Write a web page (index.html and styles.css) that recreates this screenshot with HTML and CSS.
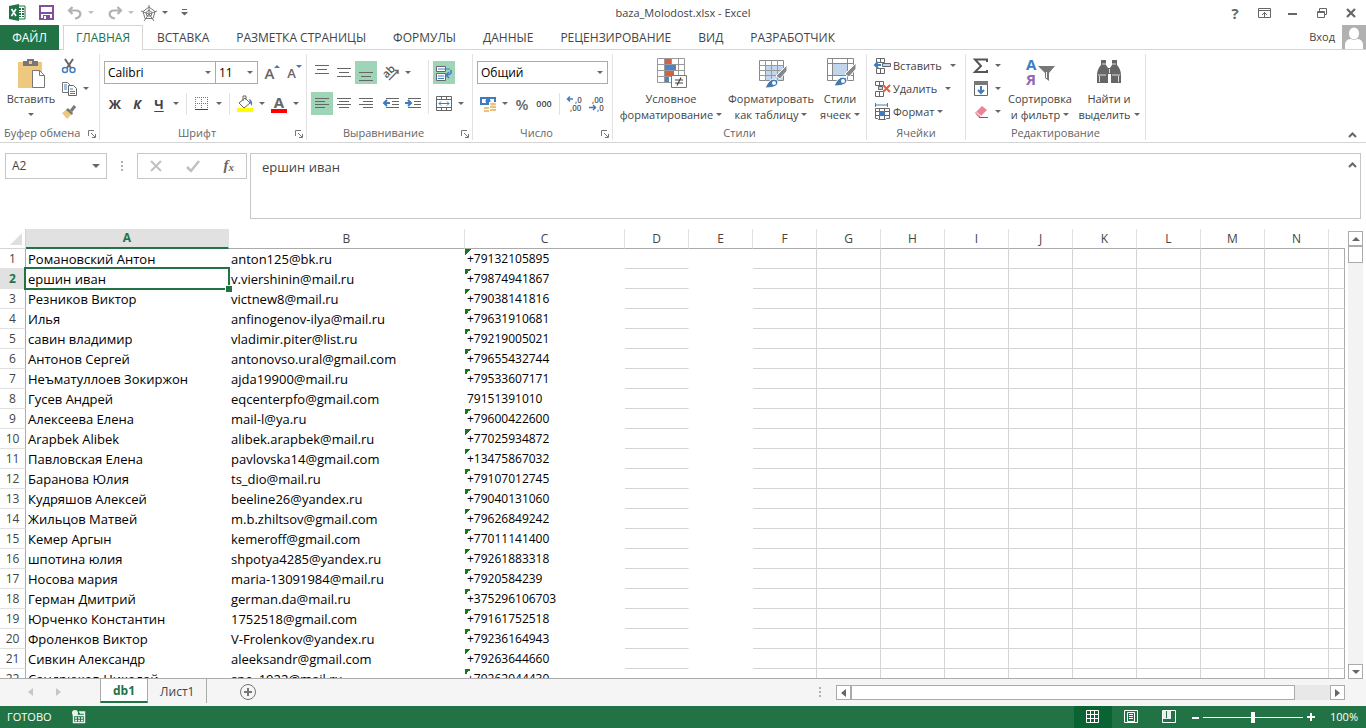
FILE: index.html
```html
<!DOCTYPE html>
<html lang="ru">
<head>
<meta charset="utf-8">
<title>baza_Molodost.xlsx - Excel</title>
<link rel="stylesheet" href="styles.css">
</head>
<body>
<header class="titlebar">
  <div class="quick">
    <svg class="app" width="17" height="17" viewBox="0 0 17 17"><path d="M9 2h7v13H9z" fill="#fff" stroke="#217346"/><path d="M10 4h2v2h-2zM13 4h2v2h-2zM10 7h2v1h-2zM13 7h2v1h-2zM10 9h2v2h-2zM13 9h2v2h-2zM10 12h2v1h-2zM13 12h2v1h-2z" fill="#217346"/><path d="M0 2l10-2v17L0 15z" fill="#217346"/><path d="M2.500 5l4.500 7M7 5l-4.500 7" stroke="#fff" stroke-width="1.600"/></svg>
    <button class="qbtn" aria-label="Сохранить"><svg width="15" height="15" viewBox="0 0 15 15"><path d="M1 1h13v13H1z" fill="none" stroke="#80509f" stroke-width="2"/><path d="M2 7h11v2H2zM4 10h7v4H4z" fill="#80509f"/><path d="M5 11h2v3H5z" fill="#fff"/></svg></button>
    <button class="qbtn" aria-label="Отменить"><svg width="16" height="14" viewBox="0 0 16 14"><path d="M5.500 1L2 4.500 5.500 8M2 4.500h7c6 0 6 7-1 8" fill="none" stroke="#b1b1b1" stroke-width="2.200"/></svg><i class="tri pale"></i></button>
    <button class="qbtn" aria-label="Вернуть"><svg width="16" height="14" viewBox="0 0 16 14"><path d="M10.500 1L14 4.500 10.500 8M14 4.500H7c-6 0-6 7 1 8" fill="none" stroke="#b1b1b1" stroke-width="2.200"/></svg><i class="tri pale"></i></button>
    <button class="qbtn near" aria-label="Диаграмма"><svg width="16" height="16" viewBox="0 0 16 16"><path d="M8 2l6 4.500-2 7H4l-2-7zM8 5l3 2.500-1 3.500H6L5 7.500zM8 0v9M0 6l8 3M16 6L8 9M3 16l5-7M13 16L8 9" fill="none" stroke="#777"/></svg><i class="tri"></i></button>
    <button class="qbtn" aria-label="Настройка панели"><svg width="7" height="7" viewBox="0 0 7 7"><path d="M1 0h5v1H1zM0 3h7L3.500 6.500z" fill="#666"/></svg></button>
  </div>
  <h1 class="doc">baza_Molodost.xlsx - Excel</h1>
  <div class="window">
    <button class="win help" aria-label="Справка">?</button>
    <button class="win" aria-label="Параметры ленты"><svg width="13" height="10" viewBox="0 0 13 10"><path d="M.5.5h12v9H.5zM1 2.500h11" fill="none" stroke="#666"/><path d="M6 4h1v5H6zM5 5h3v1H5zM4 6h1v1H4zM8 6h1v1H8z" fill="#666"/></svg></button>
    <button class="win" aria-label="Свернуть"><svg width="10" height="10"><path d="M0 5h9v2H0z" fill="#666"/></svg></button>
    <button class="win" aria-label="Восстановить"><svg width="10" height="10" viewBox="0 0 10 10"><path d="M2.500 3V.5h7v6H7.500M.5 3.500h7v6h-7zM0 4.500h8" fill="none" stroke="#666"/></svg></button>
    <button class="win" aria-label="Закрыть"><svg width="10" height="10" viewBox="0 0 10 10"><path d="M1 1l8 8M9 1L1 9" stroke="#666" stroke-width="2.200"/></svg></button>
  </div>
</header>

<nav class="tabs">
  <button class="file">ФАЙЛ</button>
  <button class="tab active">ГЛАВНАЯ</button>
  <button class="tab">ВСТАВКА</button>
  <button class="tab">РАЗМЕТКА СТРАНИЦЫ</button>
  <button class="tab">ФОРМУЛЫ</button>
  <button class="tab">ДАННЫЕ</button>
  <button class="tab">РЕЦЕНЗИРОВАНИЕ</button>
  <button class="tab">ВИД</button>
  <button class="tab">РАЗРАБОТЧИК</button>
  <button class="login">Вход <svg width="24" height="24" viewBox="0 0 24 24"><path d="M0 0h24v24H0z" fill="#b1b1b1"/><ellipse cx="12" cy="8.500" rx="5" ry="6" fill="#fff"/><path d="M3 24v-5q1-5 6-5 3 2 6 0 5 0 6 5v5z" fill="#fff"/></svg></button>
</nav>

<section class="ribbon">
  <div class="group g-clip">
    <div class="body">
      <button class="large paste"><svg width="32" height="32" viewBox="0 0 32 32"><path d="M3 5h24v26H3z" fill="#edc87e"/><path d="M9 4h3V2h7v2h4v5H8V4z" fill="#777"/><path d="M14 4h3v3h-3z" fill="#edc87e"/><path d="M17.500 13.500h7l5 5v12h-12z" fill="#fff" stroke="#777"/><path d="M24.500 13.500v5h5" fill="none" stroke="#777"/></svg><span>Вставить</span><i class="tri"></i></button>
      <div class="stack">
        <button class="btn" aria-label="Вырезать"><svg width="16" height="16" viewBox="0 0 16 16"><path d="M4 1l6 9M12 1l-6 9" stroke="#666" stroke-width="2"/><circle cx="4" cy="12" r="2.500" fill="none" stroke="#4a7fb8" stroke-width="1.500"/><circle cx="11.500" cy="12" r="2.500" fill="none" stroke="#4a7fb8" stroke-width="1.500"/></svg></button>
        <span class="split"><button class="btn" aria-label="Копировать"><svg width="16" height="16" viewBox="0 0 16 16"><path d="M1.500 1.500h5l3 3v7h-8z" fill="#fff" stroke="#777"/><path d="M3 4h3M3 6h3M3 8h3" stroke="#4a7fb8"/><path d="M7.500 4.500h5l3 3v7h-8z" fill="#fff" stroke="#666"/><path d="M9 8h3M9 10.500h5M9 12.500h5" stroke="#4a7fb8"/></svg></button><button class="arr" aria-label="Ещё"><i class="tri"></i></button></span>
        <button class="btn" aria-label="Формат по образцу"><svg width="16" height="16" viewBox="0 0 16 16"><path d="M1 9l5-4 5 5-5 5z" fill="#edc87e"/><path d="M7 4l5 5-1 2-6-5z" fill="#777"/><path d="M10 7l4-5" stroke="#777" stroke-width="3"/></svg></button>
      </div>
    </div>
    <div class="caption">Буфер обмена<button class="launch" aria-label="Параметры буфера"><svg width="8" height="8" viewBox="0 0 8 8"><path d="M.5 6V.5H6M3 3l4 4M7.500 4v3.500H4" fill="none" stroke="#777"/></svg></button></div>
  </div>

  <div class="group g-font">
    <div class="body rows">
      <div class="row"><label class="combo c-font"><select aria-label="Шрифт"><option>Calibri</option></select><i class="tri"></i></label><label class="combo c-size"><select aria-label="Размер"><option>11</option></select><i class="tri"></i></label><span class="gap2"></span><button class="btn grow" aria-label="Увеличить размер">A<i class="up"></i></button><button class="btn grow small" aria-label="Уменьшить размер">A<i class="down"></i></button></div>
      <div class="row"><button class="btn bold">Ж</button><button class="btn ital">К</button><button class="btn under">Ч</button><button class="arr" aria-label="Ещё"><i class="tri"></i></button><i class="sep"></i><button class="btn" aria-label="Границы"><svg width="14" height="14" viewBox="0 0 14 14"><path d="M0 .5h13M0 6.500h13M.5 0v13M6.500 0v13M12.500 0v13" stroke="#777" stroke-dasharray="1 1"/><path d="M0 12.500h13" stroke="#444"/></svg></button><button class="arr" aria-label="Ещё"><i class="tri"></i></button><i class="sep"></i><button class="btn" aria-label="Цвет заливки"><svg width="18" height="18" viewBox="0 0 18 18"><path d="M1 13h16v4H1z" fill="#ff0"/><path d="M3 8l6-5 5 5-6 5zM7 6V1h3v4" fill="#fff" stroke="#666"/><path d="M13 4q4 1 3 7l-2-3z" fill="#4a7fb8"/></svg></button><button class="arr" aria-label="Ещё"><i class="tri"></i></button><button class="btn" aria-label="Цвет текста"><span class="fontcolor">A</span></button><button class="arr" aria-label="Ещё"><i class="tri"></i></button></div>
    </div>
    <div class="caption">Шрифт<button class="launch" aria-label="Параметры шрифта"><svg width="8" height="8" viewBox="0 0 8 8"><path d="M.5 6V.5H6M3 3l4 4M7.500 4v3.500H4" fill="none" stroke="#777"/></svg></button></div>
  </div>

  <div class="group g-align">
    <div class="body">
      <div class="rows">
        <div class="row"><button class="btn" aria-label="По верхнему краю"><svg width="16" height="16"><path d="M1 .5h14M3 4.500h10M1 8.500h14" stroke="#666"/></svg></button><button class="btn" aria-label="По середине"><svg width="16" height="16"><path d="M1 3.500h14M3 7.500h10M1 11.500h14" stroke="#666"/></svg></button><button class="btn on" aria-label="По нижнему краю"><svg width="16" height="16"><path d="M1 7.500h14M3 11.500h10M1 15.500h14" stroke="#666"/></svg></button><span class="gap2"></span><button class="btn" aria-label="Ориентация"><svg width="18" height="18" viewBox="0 0 18 18"><text x="1" y="12" class="rot" transform="rotate(-45 6 9)">ab</text><path d="M7 16l9-9M12.500 6.500H16V10" fill="none" stroke="#666" stroke-width="1.400"/></svg></button><button class="arr" aria-label="Ещё"><i class="tri"></i></button></div>
        <div class="row"><button class="btn on" aria-label="По левому краю"><svg width="16" height="14"><path d="M1 1.500h14M1 4.500h10M1 7.500h14M1 10.500h10" stroke="#666"/></svg></button><button class="btn" aria-label="По центру"><svg width="16" height="14"><path d="M1 1.500h14M3 4.500h10M1 7.500h14M3 10.500h10" stroke="#666"/></svg></button><button class="btn" aria-label="По правому краю"><svg width="16" height="14"><path d="M1 1.500h14M5 4.500h10M1 7.500h14M5 10.500h10" stroke="#666"/></svg></button><span class="gap2"></span><button class="btn" aria-label="Уменьшить отступ"><svg width="18" height="14" viewBox="0 0 18 14"><path d="M4 1.500h13M10 4.500h7M10 7.500h7M4 10.500h13" stroke="#666"/><path d="M8 6H2M5 3L2 6l3 3" fill="none" stroke="#3f7cbf" stroke-width="2"/></svg></button><button class="btn" aria-label="Увеличить отступ"><svg width="18" height="14" viewBox="0 0 18 14"><path d="M4 1.500h13M10 4.500h7M10 7.500h7M4 10.500h13" stroke="#666"/><path d="M1 6h6M4 3l3 3-3 3" fill="none" stroke="#3f7cbf" stroke-width="2"/></svg></button></div>
      </div>
      <i class="sep tall"></i>
      <div class="rows">
        <div class="row"><button class="btn on" aria-label="Перенести текст"><svg width="18" height="18" viewBox="0 0 18 18"><path d="M1.500 2.500h9v5h-9zM1.500 9.500h9v7h-9z" fill="#fff" stroke="#666"/><path d="M3 5h12M3 12h6M3 14.500h6" stroke="#3f7cbf"/><path d="M16 6v3q-1 2-5 2M14 8l-3 3 3 3" fill="none" stroke="#3f7cbf" stroke-width="1.500"/></svg></button></div>
        <div class="row"><button class="btn" aria-label="Объединить"><svg width="16" height="16" viewBox="0 0 16 16"><path d="M.5.5h15v14H.5zM0 3.500h16M0 11.500h16M5.500 0v3M10.500 0v3M5.500 12v3M10.500 12v3" fill="none" stroke="#666"/><path d="M3 7.500h10M5 5.500l-2 2 2 2M11 5.500l2 2-2 2" fill="none" stroke="#3f7cbf"/></svg></button><button class="arr" aria-label="Ещё"><i class="tri"></i></button></div>
      </div>
    </div>
    <div class="caption">Выравнивание<button class="launch" aria-label="Параметры выравнивания"><svg width="8" height="8" viewBox="0 0 8 8"><path d="M.5 6V.5H6M3 3l4 4M7.500 4v3.500H4" fill="none" stroke="#777"/></svg></button></div>
  </div>

  <div class="group g-num">
    <div class="body rows">
      <div class="row"><label class="combo c-num"><select aria-label="Числовой формат"><option>Общий</option></select><i class="tri"></i></label></div>
      <div class="row"><button class="btn" aria-label="Финансовый формат"><svg width="18" height="18" viewBox="0 0 18 18"><path d="M1 2h16v8H1z" fill="#3f7cbf"/><path d="M3 4h12v4H3z" fill="#fff"/><circle cx="9" cy="6" r="2.500" fill="#3f7cbf"/><path d="M10 7h8v9h-8zM4 11h8v6H4z" fill="#fff"/><ellipse cx="14" cy="9" rx="3" ry="1.500" fill="#edc180"/><path d="M11 11h6v2h-6zM11 14h6v2h-6zM5 12h5v2H5zM5 15h5v2H5z" fill="#edc180"/></svg></button><button class="arr" aria-label="Ещё"><i class="tri"></i></button><button class="btn pct">%</button><button class="btn zeros">000</button><i class="sep"></i><button class="btn" aria-label="Увеличить разрядность"><svg width="18" height="18" viewBox="0 0 18 18"><path d="M7 4H2M4 1.500L1.500 4 4 6.500" fill="none" stroke="#3f7cbf" stroke-width="1.500"/><text x="9" y="8" class="dec">,0</text><text x="4" y="16" class="dec">,00</text></svg></button><button class="btn" aria-label="Уменьшить разрядность"><svg width="18" height="18" viewBox="0 0 18 18"><path d="M1 12.500h6M5 10l2.500 2.500L5 15" fill="none" stroke="#3f7cbf" stroke-width="1.500"/><text x="4" y="8" class="dec">,00</text><text x="9" y="16" class="dec">,0</text></svg></button></div>
    </div>
    <div class="caption">Число<button class="launch" aria-label="Параметры числа"><svg width="8" height="8" viewBox="0 0 8 8"><path d="M.5 6V.5H6M3 3l4 4M7.500 4v3.500H4" fill="none" stroke="#777"/></svg></button></div>
  </div>

  <div class="group g-styles">
    <div class="body bigs">
      <button class="large l1"><svg width="32" height="32" viewBox="0 0 32 32"><path d="M2.500 1.500h27v24h-27zM2 7.500h28M2 13.500h28M2 19.500h28M9.500 1v25M16.500 1v25M23.500 1v25" fill="#fff" stroke="#999"/><path d="M10 2h6v5h-6zM10 14h9v5h-9z" fill="#d9603f"/><path d="M10 8h11v5H10zM10 20h4v5h-4z" fill="#4a86c5"/><path d="M16.500 18.500h15v12h-15z" fill="#fff" stroke="#777"/><path d="M20 23h8M20 26h8M26 20.500l-4 8" stroke="#444" stroke-width="1.200"/></svg><span>Условное</span><span>форматирование<i class="tri"></i></span></button>
      <button class="large l2"><svg width="32" height="32" viewBox="0 0 32 32"><path d="M4.500 3.500h24v20h-24z" fill="#fff" stroke="#888"/><path d="M11 9h17v14H11z" fill="#c1d5ec"/><path d="M4 8.500h25M4 13.500h25M4 18.500h25M10.500 3v21M16.500 3v21M22.500 3v21" stroke="#999"/><path d="M32 8v6l-7 8-4-3z" fill="#888" stroke="#fff"/><path d="M10 31q4-9 9-9 6 1 3 6-3 3-12 3z" fill="#4279b0" stroke="#fff"/><circle cx="19" cy="26" r="2" fill="#fff"/></svg><span>Форматировать</span><span>как таблицу<i class="tri"></i></span></button>
      <button class="large l3"><svg width="32" height="32" viewBox="0 0 32 32"><path d="M3.500 1.500h26v22h-26zM3 6.500h27M3 18.500h27M8.500 1v23M23.500 1v23" fill="#fff" stroke="#888"/><path d="M9 7h14v11H9z" fill="#c1d5ec"/><path d="M32 6v6l-7 8-4-3z" fill="#888" stroke="#fff"/><path d="M10 29q4-9 9-9 6 1 3 6-3 3-12 3z" fill="#4279b0" stroke="#fff"/><circle cx="19" cy="24" r="2" fill="#fff"/></svg><span>Стили</span><span>ячеек<i class="tri"></i></span></button>
    </div>
    <div class="caption">Стили</div>
  </div>

  <div class="group g-cells">
    <div class="body list">
      <button class="line"><svg width="18" height="18" viewBox="0 0 18 18"><path d="M3.500 1.500h8v4h-8zM3.500 11.500h8v5h-8zM7.500 1v4M7.500 12v4" fill="none" stroke="#666"/><path d="M9.500 6.500h8v3h-8z" fill="#c1d5ec" stroke="#666"/><path d="M8 8H3M5 5L2 8l3 3" fill="none" stroke="#3f7cbf" stroke-width="2"/></svg><span>Вставить</span><i class="tri far"></i></button>
      <button class="line"><svg width="18" height="18" viewBox="0 0 18 18"><path d="M2.500 1.500h8v4h-8zM2.500 11.500h8v5h-8zM6.500 1v4M6.500 12v4" fill="none" stroke="#666"/><path d="M5.500 6.500h4v3h-4z" fill="#c1d5ec" stroke="#666"/><path d="M10 5l7 7M17 5l-7 7" stroke="#e0603f" stroke-width="2"/></svg><span>Удалить</span><i class="tri far"></i></button>
      <button class="line"><svg width="18" height="18" viewBox="0 0 18 18"><path d="M2.500 0v4M14.500 0v4M3 2h11" stroke="#3f7cbf"/><path d="M2.500 5.500h14v10h-3l-1 1h-7l-1-1h-2zM2 8.500h15M2 12.500h15M6.500 5v11M11.500 5v11" fill="none" stroke="#666"/><path d="M6 8h6v5H6z" fill="#3f7cbf"/></svg><span>Формат</span><i class="tri"></i></button>
    </div>
    <div class="caption">Ячейки</div>
  </div>

  <div class="group g-edit">
    <div class="body">
      <div class="stack">
        <span class="split"><button class="btn" aria-label="Сумма"><svg width="16" height="16" viewBox="0 0 16 16"><path d="M14 4V1.500H2L8 8l-6 6h12V12" fill="none" stroke="#555" stroke-width="2"/></svg></button><button class="arr" aria-label="Ещё"><i class="tri"></i></button></span>
        <span class="split"><button class="btn" aria-label="Заполнить"><svg width="16" height="16" viewBox="0 0 16 16"><path d="M1.500.5h13v14h-13z" fill="#fff" stroke="#666"/><path d="M1 0h14v4H1z" fill="#777"/><path d="M8 5v7M5 9l3 3 3-3" fill="none" stroke="#3f7cbf" stroke-width="2"/></svg></button><button class="arr" aria-label="Ещё"><i class="tri"></i></button></span>
        <span class="split"><button class="btn" aria-label="Очистить"><svg width="16" height="16" viewBox="0 0 16 16"><path d="M2 9l7-7 5 4-7 7H5z" fill="#e98595"/><path d="M3.500 8.500L8 12" stroke="#fff"/><path d="M6 13.500h9" stroke="#666"/></svg></button><button class="arr" aria-label="Ещё"><i class="tri"></i></button></span>
      </div>
      <div class="bigs">
        <button class="large l4"><svg width="32" height="32" viewBox="0 0 32 32"><text x="2" y="13" class="az" fill="#3f7cbf">А</text><text x="2" y="28" class="az" fill="#9565b5">Я</text><path d="M14 9h17l-6 7v8l-4-3v-5z" fill="#777"/><path d="M22.500 15v6" stroke="#fff"/></svg><span>Сортировка</span><span>и фильтр<i class="tri"></i></span></button>
        <button class="large l5"><svg width="32" height="32" viewBox="0 0 32 32"><path d="M8 3h5v5l2 3h2l2-3V3h5v5q4 4 4 11v7H18v-9h-3v9H4v-7q0-7 4-11z" fill="#666"/><path d="M5 18h8M19 18h8M9 7h4M19 7h4M16.500 12v4M6.500 19v6M25.500 19v6" stroke="#ddd"/></svg><span>Найти и</span><span>выделить<i class="tri"></i></span></button>
      </div>
    </div>
    <div class="caption">Редактирование</div>
  </div>
  <button class="collapse" aria-label="Свернуть ленту"><svg width="9" height="6" viewBox="0 0 9 6"><path d="M1 5l3.500-3.500L8 5" fill="none" stroke="#666" stroke-width="2"/></svg></button>
</section>

<section class="formula">
  <label class="namebox"><input type="text" value="A2" aria-label="Имя"><i class="tri wide"></i></label>
  <i class="dots"></i>
  <div class="fx">
    <button aria-label="Отмена"><svg width="12" height="12" viewBox="0 0 12 12"><path d="M1 1l10 10M11 1L1 11" stroke="#c0c0c0" stroke-width="1.800"/></svg></button>
    <button aria-label="Ввод"><svg width="14" height="12" viewBox="0 0 14 12"><path d="M1 7l4 4 8-10" fill="none" stroke="#c0c0c0" stroke-width="2.500"/></svg></button>
    <button class="fn" aria-label="Вставить функцию">f<sub>x</sub></button>
  </div>
  <div class="entry"><textarea aria-label="Строка формул">ершин иван</textarea><button aria-label="Свернуть строку"><svg width="9" height="6" viewBox="0 0 9 6"><path d="M1 5l3.500-3.500L8 5" fill="none" stroke="#666" stroke-width="2"/></svg></button></div>
</section>

<main class="sheet">
  <div class="grid">
    <table>
      <colgroup><col class="k-row"><col class="k-a"><col class="k-b"><col class="k-c"><col class="k-n" span="11"><col></colgroup>
      <thead><tr><th class="corner"><svg width="12" height="12"><path d="M12 0v12H0z" fill="#dfdfdf"/></svg></th><th class="cur">A</th><th>B</th><th>C</th><th>D</th><th>E</th><th>F</th><th>G</th><th>H</th><th>I</th><th>J</th><th>K</th><th>L</th><th>M</th><th>N</th><th></th></tr></thead>
      <tbody id="rows"></tbody>
    </table>
  </div>
  <div class="vscroll"><button aria-label="Вверх"><i class="tri wide flip"></i></button><div class="vthumb"></div><div class="fill"></div><button aria-label="Вниз"><i class="tri wide"></i></button></div>
</main>

<footer class="sheets">
  <button class="nav" aria-label="Назад"><svg width="5" height="8"><path d="M5 0v8L0 4z" fill="#c6c6c6"/></svg></button>
  <button class="nav" aria-label="Вперёд"><svg width="5" height="8"><path d="M0 0v8l5-4z" fill="#c6c6c6"/></svg></button>
  <button class="stab active">db1</button>
  <button class="stab">Лист1</button>
  <button class="add" aria-label="Новый лист"><svg width="16" height="16" viewBox="0 0 16 16"><circle cx="8" cy="8" r="7.500" fill="none" stroke="#777"/><path d="M8 4v8M4 8h8" stroke="#777" stroke-width="2"/></svg></button>
  <i class="dots"></i>
  <div class="hscroll"><button aria-label="Влево"><svg width="5" height="8"><path d="M5 0v8L0 4z" fill="#666"/></svg></button><div class="hthumb"></div><div class="fill"></div><button aria-label="Вправо"><svg width="5" height="8"><path d="M0 0v8l5-4z" fill="#666"/></svg></button></div>
</footer>

<div class="status">
  <span class="ready">ГОТОВО</span>
  <svg class="macro" width="14" height="14" viewBox="0 0 14 14"><path d="M1.500 5v7.500h11V2H7M1 5.500h12M3 8h2M6 8h2M9 8h2M3 10.500h2M6 10.500h2M9 10.500h2M8 3h4" fill="none" stroke="#e8f2ec" stroke-width="1.400"/><circle cx="3" cy="3" r="3" fill="#e8f2ec"/></svg>
  <button class="view on" aria-label="Обычный"><svg width="14" height="14"><path d="M.5.5h12v12H.5zM0 4.500h13M0 8.500h13M4.500 0v13M8.500 0v13" fill="none" stroke="#fff"/></svg></button>
  <button class="view" aria-label="Разметка"><svg width="14" height="14"><path d="M.5.5h13v12H.5zM3.500 2.500h7v9h-7zM5 4.500h4M5 6.500h4M5 8.500h4" fill="none" stroke="#fff"/></svg></button>
  <button class="view" aria-label="Страничный"><svg width="14" height="14"><path d="M.5.5h13v12H.5z" fill="none" stroke="#fff"/><path d="M1 1h3v7H1zM5 1h4v7H5zM1 8h8v1H1z" fill="#e8f2ec"/></svg></button>
  <button class="zoom" aria-label="Уменьшить"><svg width="7" height="7"><path d="M0 3h7v2H0z" fill="#fff"/></svg></button>
  <input class="slider" type="range" min="0" max="100" value="50" aria-label="Масштаб">
  <button class="zoom" aria-label="Увеличить"><svg width="8" height="8"><path d="M0 3h8v2H0zM3 0h2v8H3z" fill="#fff"/></svg></button>
  <span class="percent">100%</span>
</div>
<script src="rows.js"></script>
</body>
</html>
```
FILE: styles.css
```css
* { box-sizing: border-box; }
body {
  margin: 0; height: 100vh; overflow: hidden; display: flex; flex-direction: column;
  background: #fff; color: #444; font: 12px/16px "Open Sans", "Noto Sans", sans-serif;
}
button, select, input, textarea { font: inherit; color: inherit; border: 0; padding: 0; margin: 0; background: none; border-radius: 0; outline: 0; }
button { white-space: nowrap; }
svg { display: block; flex: none; overflow: visible; }

.tri { display: inline-block; flex: none; border: 3px solid transparent; border-top-color: #666; border-bottom: 0; }
.tri.pale { border-top-color: #c0c0c0; }
.tri.wide { border-width: 4px; border-bottom-width: 0; }
.tri.flip { transform: rotate(180deg); }

.titlebar { display: grid; grid-template-columns: 1fr auto 1fr; align-items: center; height: 25px; padding: 0 4px; }
.quick { display: flex; align-items: center; height: 22px; gap: 13px; padding-left: 5px; }
.qbtn { display: flex; align-items: center; gap: 5px; }
.qbtn.near { margin-left: -6px; }
.doc { margin: 0; font-size: 11px; font-weight: 400; }
.window { display: flex; justify-content: flex-end; gap: 7px; }
.win { display: flex; align-items: center; justify-content: center; width: 22px; height: 22px; }
.help { font-size: 15px; font-weight: 700; color: #666; }

.tabs { display: flex; height: 25px; border-bottom: 1px solid #d4d4d4; }
.file { width: 59px; background: #217346; color: #fff; height: 25px; margin-right: 4px; }
.tab { padding: 0 12px; height: 24px; border: 1px solid transparent; border-bottom: 0; margin-right: 1px; }
.tab.active { height: 25px; background: #fff; border-color: #d4d4d4; color: #217346; }
.login { display: flex; align-items: center; gap: 7px; margin-left: auto; height: 24px; font-size: 11px; }

.ribbon { display: flex; height: 93px; padding: 4px 0 1px; border-bottom: 1px solid #d4d4d4; font-size: 11px; }
.group { display: flex; flex-direction: column; flex: none; padding-left: 4px; border-right: 1px solid #e1e1e1; margin-bottom: 1px; }
.g-clip { width: 100px; }
.g-font { width: 207px; }
.g-align { width: 166px; }
.g-num { width: 140px; }
.g-styles { width: 254px; }
.g-cells { width: 99px; }
.g-edit { width: 180px; }
.body { display: flex; flex: 1; }
.caption { position: relative; height: 15px; text-align: center; font-size: 11px; color: #666; padding-right: 16px; white-space: nowrap; }
.g-clip .caption { text-align: left; }
.g-styles .caption, .g-cells .caption, .g-edit .caption { padding-right: 4px; }
.launch { position: absolute; right: 3px; top: 5px; }
.rows { display: flex; flex-direction: column; gap: 8px; padding-top: 7px; }
.row { display: flex; align-items: center; height: 23px; }
.btn { display: flex; align-items: center; justify-content: center; width: 22px; height: 23px; flex: none; }
.btn.on { background: #9fd5b7; }
.arr { display: flex; align-items: center; justify-content: center; width: 12px; height: 23px; flex: none; }
.sep { width: 1px; height: 22px; margin: 0 4px; background: #e1e1e1; flex: none; }
.sep.tall { height: 54px; margin-top: 6px; }
.gap2 { width: 3px; }
.stack { display: flex; flex-direction: column; }
.split { display: flex; }
.large { display: flex; flex-direction: column; align-items: center; padding-top: 3px; }
.large svg { margin-bottom: 2px; }
.large span .tri { margin-left: 3px; vertical-align: 3px; }
.paste { width: 54px; }
.paste > .tri { margin-top: 6px; }
.bigs { display: flex; gap: 2px; }
.l1 { width: 108px; }
.l2 { width: 88px; }
.l3 { width: 46px; }
.l4 { width: 72px; }
.l5 { width: 62px; }
.list { flex-direction: column; }
.line { display: flex; align-items: center; height: 23px; padding-left: 2px; }
.line span { margin: 0 3px 0 2px; }
.line .far { margin-left: 5px; }
.combo { position: relative; display: flex; height: 23px; border: 1px solid #ababab; color: #000; background: #fff; font-size: 12px; }
.combo select { appearance: none; width: 100%; padding-left: 3px; }
.combo .tri { position: absolute; right: 4px; top: 9px; pointer-events: none; }
.c-font { width: 112px; margin-right: -1px; }
.c-size { width: 43px; }
.c-num { width: 131px; }
.grow { position: relative; font-size: 15px; font-weight: 600; color: #666; padding-right: 5px; }
.grow.small { font-size: 13px; }
.up, .down { position: absolute; right: 3px; top: 4px; border: 3px solid transparent; }
.up { border-bottom-color: #3f7cbf; border-top: 0; }
.down { border-top-color: #3f7cbf; border-bottom: 0; }
.bold, .ital, .under { font-weight: 700; font-size: 13px; }
.ital { font-style: italic; }
.under { text-decoration: underline; text-underline-offset: 2px; }
.fontcolor { width: 16px; border-bottom: 4px solid #f00; font-size: 15px; line-height: 14px; font-weight: 700; color: #666; }
.rot { font-size: 11px; font-weight: 600; fill: #555; }
.pct { font-size: 15px; font-weight: 600; color: #666; }
.zeros { font-size: 9px; font-weight: 600; }
.dec { font-size: 8px; font-weight: 600; fill: #555; }
.az { font-size: 15px; font-weight: 700; }
.collapse { margin: auto 9px 1px auto; height: 10px; }

.formula { display: flex; align-items: flex-start; padding: 10px 5px; height: 86px; font-size: 12px; }
.namebox { display: flex; align-items: center; width: 102px; height: 26px; padding: 0 6px; border: 1px solid #c6c6c6; }
.namebox input { flex: 1; min-width: 0; }
.dots { width: 2px; height: 11px; flex: none; background: repeating-linear-gradient(#b1b1b1 0 2px, transparent 2px 4px); }
.formula .dots { margin: 8px 14px; }
.fx { display: flex; align-items: center; justify-content: space-around; width: 110px; height: 26px; border: 1px solid #c6c6c6; margin-right: 3px; }
.fn { font: italic 700 15px/20px "Liberation Serif", serif; color: #666; }
.fn sub { font-size: 11px; vertical-align: -1px; }
.entry { flex: 1; display: flex; align-items: flex-start; height: 66px; border: 1px solid #c6c6c6; padding: 5px 3px 0 11px; }
.entry textarea { flex: 1; height: 56px; resize: none; font-size: 13px; line-height: 16px; }
.entry button { padding-top: 3px; }

.sheet { flex: 1; min-height: 0; display: flex; }
.grid { flex: 1; overflow: hidden; border-bottom: 1px solid #ababab; }
table { width: 100%; table-layout: fixed; border-collapse: separate; border-spacing: 0; line-height: 18px; }
.k-row { width: 26px; }
.k-a { width: 203px; }
.k-b { width: 236px; }
.k-c { width: 160px; }
.k-n { width: 64px; }
th, td { height: 20px; padding: 0; white-space: nowrap; }
thead th { font-weight: 400; border-right: 1px solid #e1e1e1; border-bottom: 1px solid #ababab; }
thead th:last-child { border-right: 0; }
thead .corner { border-color: #d4d4d4; padding-left: 10px; }
thead .cur { background: #e1e1e1; color: #217346; font-weight: 700; border-bottom: 2px solid #217346; }
tbody th { font-weight: 400; border-right: 1px solid #ababab; border-bottom: 1px solid #e1e1e1; }
tbody th.cur { background: #e1e1e1; color: #217346; font-weight: 700; }
td { border-bottom: 1px solid #d4d4d4; border-right: 1px solid #d4d4d4; }
td:last-child { border-right-color: #ababab; }
td.text { position: relative; color: #000; font-size: 13px; border-color: transparent; padding-left: 2px; }
td.tel { font-size: 12px; }
td.flag::before { content: ""; position: absolute; left: 0; top: 0; width: 6px; height: 6px; background: linear-gradient(135deg, #107c10 50%, transparent 50%); }
td.col-d, td.col-e { border-right-color: transparent; }
td.col-e { border-bottom-color: transparent; }
.select { position: absolute; inset: -2px; border: 2px solid #217346; z-index: 1; }
.select::after { content: ""; position: absolute; right: -4px; bottom: -4px; width: 6px; height: 6px; background: #217346; border: 1px solid #fff; border-right: 0; border-bottom: 0; }
.vscroll { display: flex; flex-direction: column; width: 15px; margin: 2px 3px 0 3px; background: #f3f3f3; }
.vscroll button { display: flex; align-items: center; justify-content: center; height: 15px; border: 1px solid #ababab; background: #fff; }
.vthumb { height: 17px; border: 1px solid #ababab; background: #fff; }
.fill { flex: 1; }

.sheets { display: flex; height: 27px; background: #f5f5f5; padding: 0 21px 0 16px; }
.nav { display: flex; align-items: center; justify-content: center; width: 28px; height: 25px; }
.stab { padding: 2px 12px 0; height: 24px; font-size: 12px; }
.stab.active { margin-left: 28px; background: #fff; color: #217346; font-weight: 700; border: 1px solid #ababab; border-width: 0 1px 2px; border-bottom-color: #217346; }
.stab + .stab { border-right: 1px solid #ababab; }
.add { width: 82px; height: 26px; display: flex; align-items: center; justify-content: center; }
.sheets > .dots { margin: 8px 15px 0 auto; }
.hscroll { display: flex; width: 509px; height: 15px; margin-top: 6px; background: #e8e8e8; }
.hscroll button { display: flex; align-items: center; justify-content: center; width: 15px; background: #fff; border: 1px solid #ababab; }
.hthumb { width: 444px; background: #fff; border: 1px solid #ababab; }

.status { display: flex; align-items: center; height: 22px; padding: 0 8px 0 7px; background: #217346; color: #fff; font-size: 11px; }
.macro { margin: 0 auto 0 20px; }
.view { display: flex; align-items: center; justify-content: center; width: 38px; height: 22px; }
.view.on { background: #0a6332; }
.zoom { display: flex; align-items: center; justify-content: center; width: 14px; height: 22px; }
.slider { appearance: none; width: 100px; height: 11px; margin: 0 1px; background: linear-gradient(#fff, #fff) center / 100% 1px no-repeat; }
.slider::-webkit-slider-thumb { appearance: none; width: 4px; height: 11px; background: #fff; }
.percent { margin-left: 12px; }
```
FILE: rows.js
```js
const contacts = [
  ["Романовский Антон", "anton125@bk.ru", "+79132105895"],
  ["ершин иван", "v.viershinin@mail.ru", "+79874941867"],
  ["Резников Виктор", "victnew8@mail.ru", "+79038141816"],
  ["Илья", "anfinogenov-ilya@mail.ru", "+79631910681"],
  ["савин владимир", "vladimir.piter@list.ru", "+79219005021"],
  ["Антонов Сергей", "antonovso.ural@gmail.com", "+79655432744"],
  ["Неъматуллоев Зокиржон", "ajda19900@mail.ru", "+79533607171"],
  ["Гусев Андрей", "eqcenterpfo@gmail.com", "79151391010"],
  ["Алексеева Елена", "mail-l@ya.ru", "+79600422600"],
  ["Arapbek Alibek", "alibek.arapbek@mail.ru", "+77025934872"],
  ["Павловская Елена", "pavlovska14@gmail.com", "+13475867032"],
  ["Баранова Юлия", "ts_dio@mail.ru", "+79107012745"],
  ["Кудряшов Алексей", "beeline26@yandex.ru", "+79040131060"],
  ["Жильцов Матвей", "m.b.zhiltsov@gmail.com", "+79626849242"],
  ["Кемер Аргын", "kemeroff@gmail.com", "+77011141400"],
  ["шпотина юлия", "shpotya4285@yandex.ru", "+79261883318"],
  ["Носова мария", "maria-13091984@mail.ru", "+7920584239"],
  ["Герман Дмитрий", "german.da@mail.ru", "+375296106703"],
  ["Юрченко Константин", "1752518@gmail.com", "+79161752518"],
  ["Фроленков Виктор", "V-Frolenkov@yandex.ru", "+79236164943"],
  ["Сивкин Александр", "aleeksandr@gmail.com", "+79263644660"],
  ["Сандрюков Николай", "spo_1922@mail.ru", "+79262944430"]
];
const active = 1;
const blanks = '<td class="col-d"></td><td class="col-e"></td>' + "<td></td>".repeat(10);
document.getElementById("rows").innerHTML = contacts.map(([name, mail, tel], i) => {
  const cur = i === active;
  return `<tr><th${cur ? ' class="cur"' : ""}>${i + 1}</th>` +
    `<td class="text">${name}${cur ? '<span class="select"></span>' : ""}</td>` +
    `<td class="text">${mail}</td>` +
    `<td class="text tel${tel[0] === "+" ? " flag" : ""}">${tel}</td>${blanks}</tr>`;
}).join("");
```
